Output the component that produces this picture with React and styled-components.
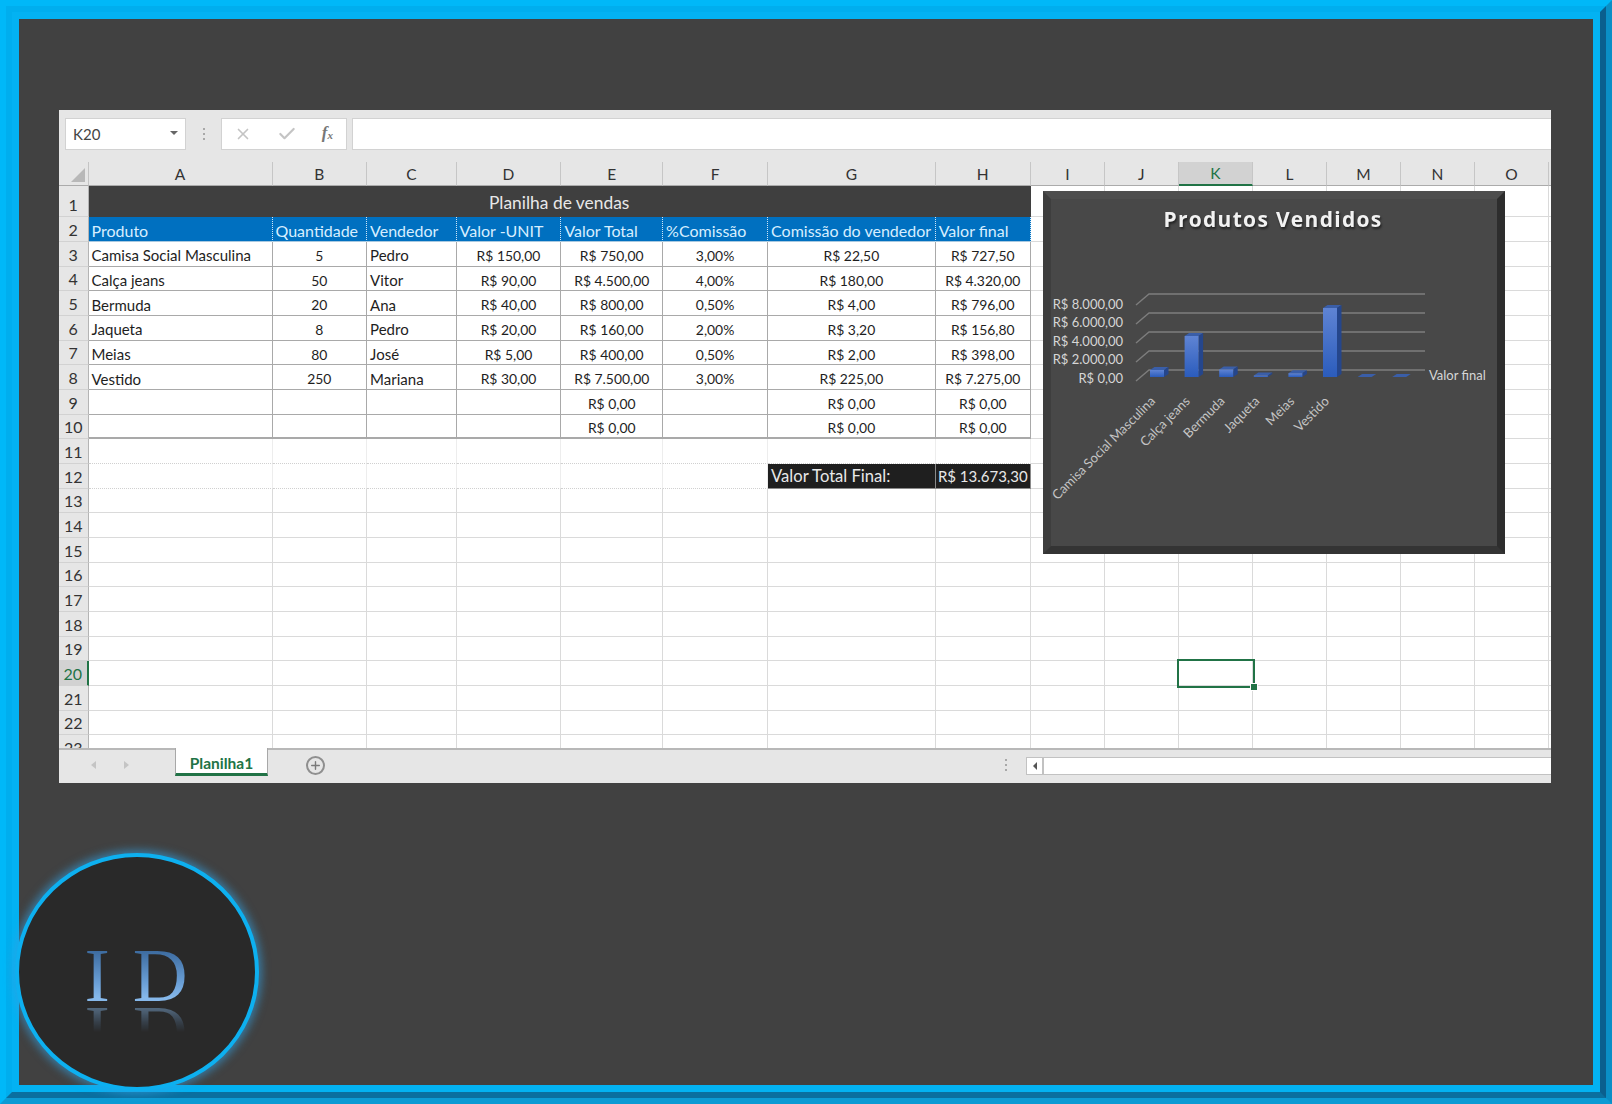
import React from 'react';
import styled, { createGlobalStyle } from 'styled-components';
import { X, Check, Plus } from 'lucide-react';

const GlobalStyle = createGlobalStyle`
  html, body {
    margin: 0;
    padding: 0;
    background: #414141;
    overflow: hidden;
  }
  * {
    box-sizing: border-box;
  }
`;

const FrameOuter = styled.div`
  position: relative;
  width: 1612px;
  height: 1104px;
  border: 6px solid;
  border-color: #00b8f8 #0a8fc6 #0c9bd4 #00b8f8;
`;

const FrameMiddle = styled.div`
  height: 100%;
  border: 6px solid;
  border-color: #00aeee #0a5f8e #0a6f9f #00aeee;
`;

const FrameInner = styled.main`
  height: 100%;
  border: 7px solid #03b2f2;
  background: #414141;
  padding: 91px 0 0 40px;
`;

const ExcelWindow = styled.section`
  width: 1492px;
  height: 673px;
  display: flex;
  flex-direction: column;
  background: #e6e6e6;
  font-family: 'Lato', 'Liberation Sans', sans-serif;
  color: #222;
  overflow: hidden;
`;

const FormulaBar = styled.div`
  flex: none;
  height: 52px;
  padding: 8px 0 12px 6px;
  display: flex;
`;

const NameBox = styled.div`
  width: 121px;
  display: flex;
  align-items: center;
  justify-content: space-between;
  padding: 0 7px;
  background: #fff;
  border: 1px solid #d2d2d2;
  font-size: 15px;
  color: #444;

  &::after {
    content: '';
    border-left: 4px solid transparent;
    border-right: 4px solid transparent;
    border-top: 4px solid #666;
    margin-top: -3px;
  }
`;

const DotGrip = styled.div`
  width: 35px;
  display: flex;
  flex-direction: column;
  align-items: center;
  justify-content: center;
  gap: 3px;

  i {
    width: 2px;
    height: 2px;
    background: #a8a8a8;
  }
`;

const FormulaButtons = styled.div`
  width: 126px;
  display: flex;
  align-items: center;
  justify-content: space-between;
  padding: 0 13px 0 12px;
  background: #fff;
  border: 1px solid #d2d2d2;
  color: #c4c4c4;
`;

const FxLabel = styled.span`
  font-family: 'Liberation Serif', serif;
  font-style: italic;
  font-size: 17px;
  font-weight: 700;
  color: #777;
  margin-top: -3px;

  sub {
    font-size: 11px;
    vertical-align: -1px;
  }
`;

const FormulaInput = styled.div`
  flex: 1;
  margin-left: 5px;
  background: #fff;
  border: 1px solid #d2d2d2;
  border-right: 0;
`;

const Sheet = styled.div`
  position: relative;
  flex: 1;
  min-height: 0;
  overflow: hidden;
  display: grid;
  grid-template-columns: 29.5px 184px 94.6px 89.5px 104.8px 101.7px 105px 167.6px 95.2px repeat(7, 74px) 1fr;
  grid-template-rows: 24px 31.4px repeat(22, 24.67px);
  background: #fff;
`;

const Corner = styled.div`
  background: #e6e6e6;
  border-right: 1px solid #c4c4c4;
  border-bottom: 1px solid #ababab;
  position: relative;

  &::after {
    content: '';
    position: absolute;
    right: 3px;
    bottom: 3px;
    border-left: 14px solid transparent;
    border-bottom: 14px solid #b8b8b8;
  }
`;

const ColumnHead = styled.div`
  display: flex;
  align-items: center;
  justify-content: center;
  font-size: 15.5px;
  background: ${(p) => (p.$active ? '#d2d2d2' : '#e6e6e6')};
  color: ${(p) => (p.$active ? '#217346' : '#333')};
  border-right: 1px solid #c6c6c6;
  border-bottom: ${(p) => (p.$active ? '2px solid #217346' : '1px solid #ababab')};
`;

const ColumnFill = styled.div`
  background: #e6e6e6;
  border-bottom: 1px solid #ababab;
`;

const RowHead = styled.div`
  display: flex;
  align-items: flex-end;
  justify-content: center;
  padding-bottom: 2px;
  font-size: 16px;
  background: ${(p) => (p.$active ? '#d2d2d2' : '#e6e6e6')};
  color: ${(p) => (p.$active ? '#217346' : '#333')};
  border-bottom: 1px solid #d2d2d2;
  border-right: ${(p) => (p.$active ? '2px solid #217346' : '1px solid #b4b4b4')};
`;

const Cell = styled.div`
  position: relative;
  display: flex;
  align-items: center;
  justify-content: ${(p) => (p.$center ? 'center' : 'flex-start')};
  padding: 0 3px;
  font-size: 14.6px;
  white-space: nowrap;
  color: #1e1e1e;
  border-right: 1px solid #dadada;
  border-bottom: 1px solid #dadada;
`;

const TableCell = styled(Cell)`
  padding-top: 3px;
  font-size: ${(p) => (p.$center ? '13.9px' : '15px')};
  border-color: #a9a9a9;
  ${(p) => p.$last && 'border-bottom-width: 2px;'}
`;

const HeaderCell = styled(Cell)`
  padding-top: 2px;
  background: #0070c0;
  color: #d7eeff;
  font-size: 16px;
  border-right: 1px dotted #cfe6f7;
  border-bottom: 1px solid #a9c9e0;
`;

const TitleCell = styled(Cell)`
  grid-column: span 8;
  justify-content: center;
  align-items: flex-end;
  padding-bottom: 3px;
  background: #3f3f3f;
  color: #e8e8e8;
  font-size: 17.4px;
  border-color: #3f3f3f;
`;

const DarkCell = styled(Cell)`
  padding-top: 1px;
  background: #1f1f1f;
  color: #e8e8e8;
  font-size: ${(p) => (p.$center ? '15px' : '16.6px')};
  border-color: #8a8a8a;
`;

const DottedCell = styled(Cell)`
  border-right-color: #ededed;
  border-bottom: 1px dotted #d0d0d0;
`;

const SelectedCell = styled(Cell)`
  outline: 2px solid #217346;
  outline-offset: 0;
  z-index: 2;

  &::after {
    content: '';
    position: absolute;
    right: -5px;
    bottom: -5px;
    width: 6px;
    height: 6px;
    background: #217346;
    border: 1px solid #fff;
    box-sizing: content-box;
    margin: -1px;
  }
`;

const ChartCard = styled.figure`
  position: absolute;
  left: 984px;
  top: 29px;
  width: 462px;
  height: 363px;
  margin: 0;
  z-index: 3;
  border: 8px solid;
  border-color: #4e4e4e #2d2d2d #343434 #3e3e3e;
  background: #484848;
`;

const ChartSvg = styled.svg`
  display: block;
  width: 446px;
  height: 347px;
  font-family: 'Lato', 'Liberation Sans', sans-serif;
`;

const ChartTitle = styled.text`
  font-family: 'Open Sans', 'Liberation Sans', sans-serif;
  font-size: 21px;
  font-weight: 700;
  letter-spacing: 1.3px;
  fill: #f2f2f2;
  filter: drop-shadow(1px 2px 1px rgba(0, 0, 0, 0.55));
`;

const AxisLabel = styled.text`
  font-size: 13px;
  fill: #d6d6d6;
`;

const CategoryLabel = styled.text`
  font-size: 13.1px;
  fill: #c4c4c4;
`;

const TabBar = styled.footer`
  flex: none;
  height: 35px;
  display: flex;
  align-items: flex-start;
  background: #e6e6e6;
  border-top: 2px solid #b8b8b8;
`;

const TabArrows = styled.div`
  width: 116px;
  height: 100%;
  display: flex;
  align-items: center;
  gap: 28px;
  padding-left: 32px;
  padding-bottom: 4px;
`;

const TabArrow = styled.span`
  border-top: 4px solid transparent;
  border-bottom: 4px solid transparent;
  ${(p) => (p.$left ? 'border-right: 5px solid #c4c4c4;' : 'border-left: 5px solid #c4c4c4;')}
`;

const Tab = styled.div`
  width: 93px;
  height: 28px;
  margin-top: -2px;
  padding-top: 4px;
  display: flex;
  align-items: center;
  justify-content: center;
  background: #fff;
  color: #217346;
  font-size: 15.5px;
  font-weight: 700;
  border-left: 1px solid #a8a8a8;
  border-right: 1px solid #a8a8a8;
  border-bottom: 3px solid #217346;
`;

const AddSheet = styled.div`
  width: 19px;
  height: 19px;
  margin: 6px 0 0 38px;
  display: flex;
  align-items: center;
  justify-content: center;
  border: 2px solid #8f8f8f;
  border-radius: 50%;
  color: #7a7a7a;
`;

const TabSpacer = styled.div`
  flex: 1;
`;

const TabGrip = styled(DotGrip)`
  width: 40px;
  height: 100%;
  padding-bottom: 3px;
`;

const ScrollBar = styled.div`
  width: 525px;
  height: 18px;
  margin-top: 7px;
  display: flex;
  background: #fff;
  border: 1px solid #c2c2c2;
  border-right: 0;
`;

const ScrollButton = styled.div`
  width: 17px;
  display: flex;
  align-items: center;
  justify-content: center;
  border-right: 2px solid #c2c2c2;

  &::before {
    content: '';
    border-top: 4px solid transparent;
    border-bottom: 4px solid transparent;
    border-right: 4px solid #555;
  }
`;

const Logo = styled.div`
  position: absolute;
  left: 9px;
  top: 847px;
  width: 244px;
  height: 238px;
  display: flex;
  align-items: center;
  justify-content: center;
  background: #292929;
  border: 4px solid #0db0f0;
  border-radius: 50%;
  box-shadow: 0 0 9px 3px rgba(50, 160, 225, 0.6);
`;

const LogoText = styled.span`
  margin-top: 6px;
  font-family: 'Liberation Serif', serif;
  font-size: 76px;
  line-height: 1;
  letter-spacing: 2px;
  background: linear-gradient(180deg, #39679b 15%, #6a9fd6 60%, #86b8ea 80%);
  -webkit-background-clip: text;
  background-clip: text;
  color: transparent;
  -webkit-box-reflect: below -17px linear-gradient(transparent 52%, rgba(255, 255, 255, 0.65));
`;

const columns = ['A', 'B', 'C', 'D', 'E', 'F', 'G', 'H', 'I', 'J', 'K', 'L', 'M', 'N', 'O'];
const headers = ['Produto', 'Quantidade', 'Vendedor', 'Valor -UNIT', 'Valor Total', '%Comissão', 'Comissão do vendedor', 'Valor final'];
const tableRows = [
  ['Camisa Social Masculina', '5', 'Pedro', 'R$ 150,00', 'R$ 750,00', '3,00%', 'R$ 22,50', 'R$ 727,50'],
  ['Calça jeans', '50', 'Vitor', 'R$ 90,00', 'R$ 4.500,00', '4,00%', 'R$ 180,00', 'R$ 4.320,00'],
  ['Bermuda', '20', 'Ana', 'R$ 40,00', 'R$ 800,00', '0,50%', 'R$ 4,00', 'R$ 796,00'],
  ['Jaqueta', '8', 'Pedro', 'R$ 20,00', 'R$ 160,00', '2,00%', 'R$ 3,20', 'R$ 156,80'],
  ['Meias', '80', 'José', 'R$ 5,00', 'R$ 400,00', '0,50%', 'R$ 2,00', 'R$ 398,00'],
  ['Vestido', '250', 'Mariana', 'R$ 30,00', 'R$ 7.500,00', '3,00%', 'R$ 225,00', 'R$ 7.275,00'],
  ['', '', '', '', 'R$ 0,00', '', 'R$ 0,00', 'R$ 0,00'],
  ['', '', '', '', 'R$ 0,00', '', 'R$ 0,00', 'R$ 0,00'],
];
const leftAligned = [0, 2];

const axisTicks = ['R$ 0,00', 'R$ 2.000,00', 'R$ 4.000,00', 'R$ 6.000,00', 'R$ 8.000,00'];
const categories = ['Camisa Social Masculina', 'Calça jeans', 'Bermuda', 'Jaqueta', 'Meias', 'Vestido'];
const barHeights = [7, 41, 7.5, 1.5, 3.8, 69, 0, 0];

const blankRange = (row, from, to) =>
  columns.slice(from, to).map((c) => {
    if (row === 20 && c === 'K') return <SelectedCell key={c + row} />;
    return <Cell key={c + row} />;
  });

const SheetRow = ({ row }) => {
  if (row === 1) {
    return (
      <>
        <TitleCell>Planilha de vendas</TitleCell>
        {blankRange(row, 8, 15)}
      </>
    );
  }
  if (row === 2) {
    return (
      <>
        {headers.map((h) => <HeaderCell key={h}>{h}</HeaderCell>)}
        {blankRange(row, 8, 15)}
      </>
    );
  }
  if (row <= 10) {
    return (
      <>
        {tableRows[row - 3].map((v, i) => (
          <TableCell key={i} $center={!leftAligned.includes(i)} $last={row === 10}>{v}</TableCell>
        ))}
        {blankRange(row, 8, 15)}
      </>
    );
  }
  if (row === 11) {
    return (
      <>
        {columns.slice(0, 8).map((c) => <DottedCell key={c} />)}
        {blankRange(row, 8, 15)}
      </>
    );
  }
  if (row === 12) {
    return (
      <>
        {columns.slice(0, 6).map((c) => <DottedCell key={c} />)}
        <DarkCell>Valor Total Final:</DarkCell>
        <DarkCell $center>R$ 13.673,30</DarkCell>
        {blankRange(row, 8, 15)}
      </>
    );
  }
  return blankRange(row, 0, 15);
};

const Bar = ({ index, height }) => {
  const x = 1150 + 34.6 * index;
  const w = 14;
  const base = 377;
  const top = base - height;
  const dx = 4.5;
  const dy = 3;
  return (
    <g>
      <polygon points={`${x},${top} ${x + dx},${top - dy} ${x + w + dx},${top - dy} ${x + w},${top}`} fill="#3a5ea8" />
      <polygon points={`${x + w},${top} ${x + w + dx},${top - dy} ${x + w + dx},${base - dy} ${x + w},${base}`} fill="#25468c" />
      <rect x={x} y={top} width={w} height={height} fill="url(#barFill)" />
    </g>
  );
};

const SalesChart = () => (
  <ChartCard>
    <ChartSvg viewBox="1051 199 446 347">
      <defs>
        <linearGradient id="barFill" x1="0" y1="0" x2="0" y2="1">
          <stop offset="0" stopColor="#5f84d4" />
          <stop offset="1" stopColor="#2b5cbc" />
        </linearGradient>
      </defs>
      <ChartTitle x="1273" y="227" textAnchor="middle">Produtos Vendidos</ChartTitle>
      {[370, 351, 332, 313, 294].map((y) => (
        <polyline key={y} points={`1136,${y + 11} 1149,${y} 1425,${y}`} fill="none" stroke="#7d7d7d" strokeWidth="1.4" />
      ))}
      {barHeights.map((h, i) => <Bar key={i} index={i} height={h} />)}
      {axisTicks.map((t, i) => (
        <AxisLabel key={t} x="1123" y={383 - i * 18.6} textAnchor="end">{t}</AxisLabel>
      ))}
      <AxisLabel x="1429" y="380">Valor final</AxisLabel>
      {categories.map((c, i) => {
        const x = 1156 + 34.8 * i;
        return (
          <CategoryLabel key={c} x={x} y="402" textAnchor="end" transform={`rotate(-45 ${x} 402)`}>{c}</CategoryLabel>
        );
      })}
    </ChartSvg>
  </ChartCard>
);

const rows = Array.from({ length: 23 }, (_, i) => i + 1);

export default function App() {
  return (
    <>
      <GlobalStyle />
      <FrameOuter>
        <FrameMiddle>
          <FrameInner>
            <ExcelWindow>
              <FormulaBar>
                <NameBox>K20</NameBox>
                <DotGrip><i /><i /><i /></DotGrip>
                <FormulaButtons>
                  <X size={18} strokeWidth={2.2} />
                  <Check size={20} strokeWidth={2.6} />
                  <FxLabel>f<sub>x</sub></FxLabel>
                </FormulaButtons>
                <FormulaInput />
              </FormulaBar>
              <Sheet>
                <Corner />
                {columns.map((c) => <ColumnHead key={c} $active={c === 'K'}>{c}</ColumnHead>)}
                <ColumnFill />
                {rows.map((row) => (
                  <React.Fragment key={row}>
                    <RowHead $active={row === 20}>{row}</RowHead>
                    <SheetRow row={row} />
                    <Cell />
                  </React.Fragment>
                ))}
                <SalesChart />
              </Sheet>
              <TabBar>
                <TabArrows>
                  <TabArrow $left />
                  <TabArrow />
                </TabArrows>
                <Tab>Planilha1</Tab>
                <AddSheet><Plus size={13} strokeWidth={2.6} /></AddSheet>
                <TabSpacer />
                <TabGrip><i /><i /><i /></TabGrip>
                <ScrollBar><ScrollButton /></ScrollBar>
              </TabBar>
            </ExcelWindow>
          </FrameInner>
        </FrameMiddle>
        <Logo>
          <LogoText>I D</LogoText>
        </Logo>
      </FrameOuter>
    </>
  );
}
